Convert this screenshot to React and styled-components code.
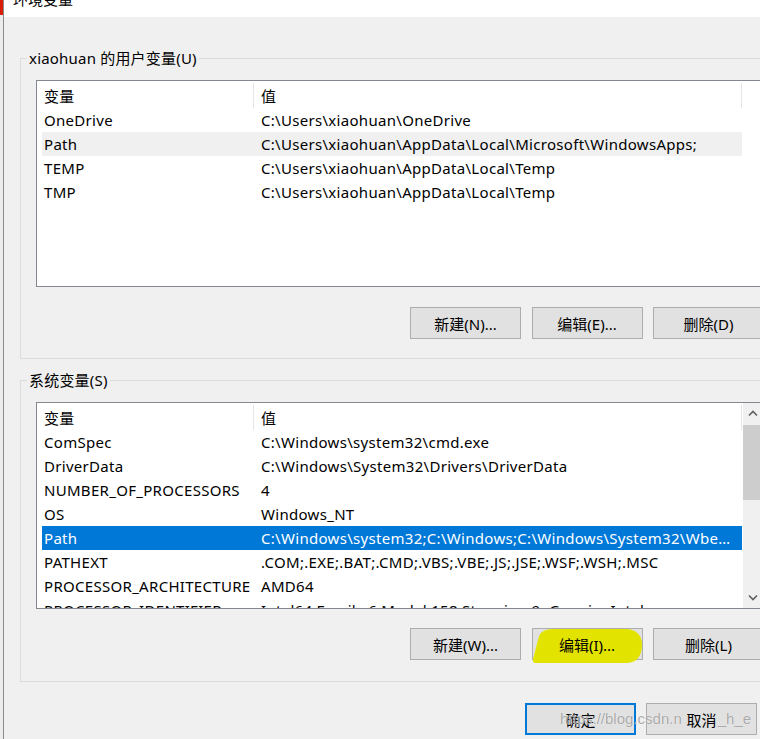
import React from "react";
import styled, { createGlobalStyle } from "styled-components";

const GlobalStyle = createGlobalStyle`
  html, body {
    margin: 0;
    padding: 0;
    width: 760px;
    height: 739px;
    overflow: hidden;
    background: #f0f0f0;
  }
  body {
    font-family: "Noto Sans", "Noto Sans CJK SC", sans-serif;
    font-size: 15px;
    color: #000;
  }
`;

const Screen = styled.div`
  display: flex;
  width: 760px;
  height: 739px;
  overflow: hidden;
`;

const OtherWindow = styled.div`
  flex: none;
  width: 3px;
  background: #ececec;
  border-right: 1px solid #8c8c8c;
`;

const RedMark = styled.div`
  height: 15px;
  background: #d81e06;
`;

const Dialog = styled.div`
  flex: none;
  width: 800px;
  display: flex;
  flex-direction: column;
  background: #f0f0f0;
`;

const TitleBar = styled.div`
  height: 17px;
  background: #fff;
  padding-left: 9px;
  overflow: hidden;
`;

const TitleText = styled.div`
  font-size: 15px;
  line-height: 20px;
  transform: translateY(-11px);
`;

const Body = styled.div`
  display: flex;
  flex-direction: column;
  padding: 31px 0 0 16px;
`;

const Group = styled.fieldset`
  margin: 0;
  min-width: 0;
  width: 760px;
  box-sizing: border-box;
  border: 1px solid #dcdcdc;
  padding: 12px 15px ${(p) => p.$bottom}px;
  & + & {
    margin-top: 11px;
  }
`;

const Legend = styled.legend`
  margin-left: -9px;
  padding: 0 2px;
  font-size: 15px;
  line-height: 20px;
  letter-spacing: 0.2px;
`;

const List = styled.div`
  height: 207px;
  box-sizing: border-box;
  border: 1px solid #828790;
  background: #fff;
  display: flex;
  overflow: hidden;
`;

const ListContent = styled.div`
  flex: 1;
  min-width: 0;
  padding-left: 5px;
  overflow: hidden;
  letter-spacing: 0.3px;
`;

const HeaderRow = styled.div`
  display: grid;
  grid-template-columns: 212px 488px 1fr;
  height: 27px;
  box-sizing: border-box;
  padding-top: 2px;
`;

const HeaderCell = styled.div`
  display: flex;
  align-items: center;
  padding-left: ${(p) => (p.$first ? 2 : 7)}px;
  border-right: ${(p) => (p.$last ? "none" : "1px solid #e5e5e5")};
`;

const Row = styled.div`
  display: grid;
  grid-template-columns: 212px 488px;
  width: 700px;
  height: 24px;
  line-height: 24px;
  background: ${(p) =>
    p.$selected ? "#0078d7" : p.$hover ? "#f0f0f0" : "transparent"};
  color: ${(p) => (p.$selected ? "#fff" : "#000")};
`;

const Cell = styled.div`
  padding-left: ${(p) => (p.$first ? 2 : 7)}px;
  padding-right: ${(p) => (p.$first ? 0 : 8)}px;
  white-space: nowrap;
  overflow: hidden;
  text-overflow: ellipsis;
`;

const Scrollbar = styled.div`
  flex: none;
  width: 20px;
  background: #f0f0f0;
  display: flex;
  flex-direction: column;
`;

const ScrollArrow = styled.div`
  height: 21px;
  display: flex;
  align-items: center;
  justify-content: center;
`;

const Thumb = styled.div`
  margin-top: 1px;
  height: 75px;
  background: #cdcdcd;
`;

const Track = styled.div`
  flex: 1;
`;

const ButtonRow = styled.div`
  position: relative;
  display: flex;
  justify-content: flex-end;
  gap: ${(p) => p.$gap || 10.5}px;
  margin-top: ${(p) => p.$top}px;
`;

const Footer = styled(ButtonRow)`
  width: 760px;
  box-sizing: border-box;
  padding-right: 23px;
`;

const Button = styled.button`
  position: relative;
  flex: none;
  width: 111px;
  height: 32px;
  box-sizing: border-box;
  padding: 0;
  background: #e1e1e1;
  border: ${(p) => (p.$default ? "2px solid #0078d7" : "1px solid #adadad")};
  font: inherit;
  font-size: 15px;
  color: #000;
`;

const ButtonLabel = styled.span`
  position: relative;
`;

const Highlight = styled.svg`
  position: absolute;
  left: -2px;
  top: -3px;
`;

const Watermark = styled.div`
  position: absolute;
  left: 540px;
  top: 6px;
  display: flex;
  gap: 36px;
  font-family: "Liberation Sans", Arial, sans-serif;
  font-size: 15px;
  line-height: 20px;
  color: rgba(135, 135, 135, 0.7);
  text-shadow: 0 0 1px rgba(255, 255, 255, 0.9);
  pointer-events: none;
`;

const Chevron = ({ down }) => (
  <svg width="10" height="7" viewBox="0 0 10 7">
    <polyline
      points={down ? "1,1.5 5,5.5 9,1.5" : "1,5.5 5,1.5 9,5.5"}
      fill="none"
      stroke="#606060"
      strokeWidth="1.6"
    />
  </svg>
);

const userVars = [
  ["OneDrive", "C:\\Users\\xiaohuan\\OneDrive"],
  ["Path", "C:\\Users\\xiaohuan\\AppData\\Local\\Microsoft\\WindowsApps;", "hover"],
  ["TEMP", "C:\\Users\\xiaohuan\\AppData\\Local\\Temp"],
  ["TMP", "C:\\Users\\xiaohuan\\AppData\\Local\\Temp"],
];

const systemVars = [
  ["ComSpec", "C:\\Windows\\system32\\cmd.exe"],
  ["DriverData", "C:\\Windows\\System32\\Drivers\\DriverData"],
  ["NUMBER_OF_PROCESSORS", "4"],
  ["OS", "Windows_NT"],
  [
    "Path",
    "C:\\Windows\\system32;C:\\Windows;C:\\Windows\\System32\\Wbem;C:\\Windows\\System32\\WindowsPowerShell\\v1.0\\",
    "selected",
  ],
  ["PATHEXT", ".COM;.EXE;.BAT;.CMD;.VBS;.VBE;.JS;.JSE;.WSF;.WSH;.MSC"],
  ["PROCESSOR_ARCHITECTURE", "AMD64"],
  ["PROCESSOR_IDENTIFIER", "Intel64 Family 6 Model 158 Stepping 9, GenuineIntel"],
];

const VarList = ({ rows, scroll }) => (
  <List>
    <ListContent>
      <HeaderRow>
        <HeaderCell $first>变量</HeaderCell>
        <HeaderCell>值</HeaderCell>
        <HeaderCell $last />
      </HeaderRow>
      {rows.map(([name, value, state]) => (
        <Row key={name} $selected={state === "selected"} $hover={state === "hover"}>
          <Cell $first>{name}</Cell>
          <Cell>{value}</Cell>
        </Row>
      ))}
    </ListContent>
    {scroll && (
      <Scrollbar>
        <ScrollArrow>
          <Chevron />
        </ScrollArrow>
        <Thumb />
        <Track />
        <ScrollArrow>
          <Chevron down />
        </ScrollArrow>
      </Scrollbar>
    )}
  </List>
);

export default function App() {
  return (
    <Screen>
      <GlobalStyle />
      <OtherWindow>
        <RedMark />
      </OtherWindow>
      <Dialog>
        <TitleBar>
          <TitleText>环境变量</TitleText>
        </TitleBar>
        <Body>
          <Group $bottom={19}>
            <Legend>xiaohuan 的用户变量(U)</Legend>
            <VarList rows={userVars} />
            <ButtonRow $top={20}>
              <Button>新建(N)...</Button>
              <Button>编辑(E)...</Button>
              <Button>删除(D)</Button>
            </ButtonRow>
          </Group>
          <Group $bottom={21}>
            <Legend>系统变量(S)</Legend>
            <VarList rows={systemVars} scroll />
            <ButtonRow $top={19}>
              <Button>新建(W)...</Button>
              <Button>
                <Highlight width="116" height="40" viewBox="0 0 116 40">
                  <path
                    d="M22 3 L97 3 Q111 5 111 19 Q111 35 97 37 L4 37 Q1 36 2 33 L8 10 Q11 3 22 3 Z"
                    fill="#e3e300"
                  />
                </Highlight>
                <ButtonLabel>编辑(I)...</ButtonLabel>
              </Button>
              <Button>删除(L)</Button>
            </ButtonRow>
          </Group>
          <Footer $top={21} $gap={10}>
            <Button $default>确定</Button>
            <Button>取消</Button>
            <Watermark>
              <span>https://blog.csdn.n</span>
              <span>_h_e</span>
            </Watermark>
          </Footer>
        </Body>
      </Dialog>
    </Screen>
  );
}
